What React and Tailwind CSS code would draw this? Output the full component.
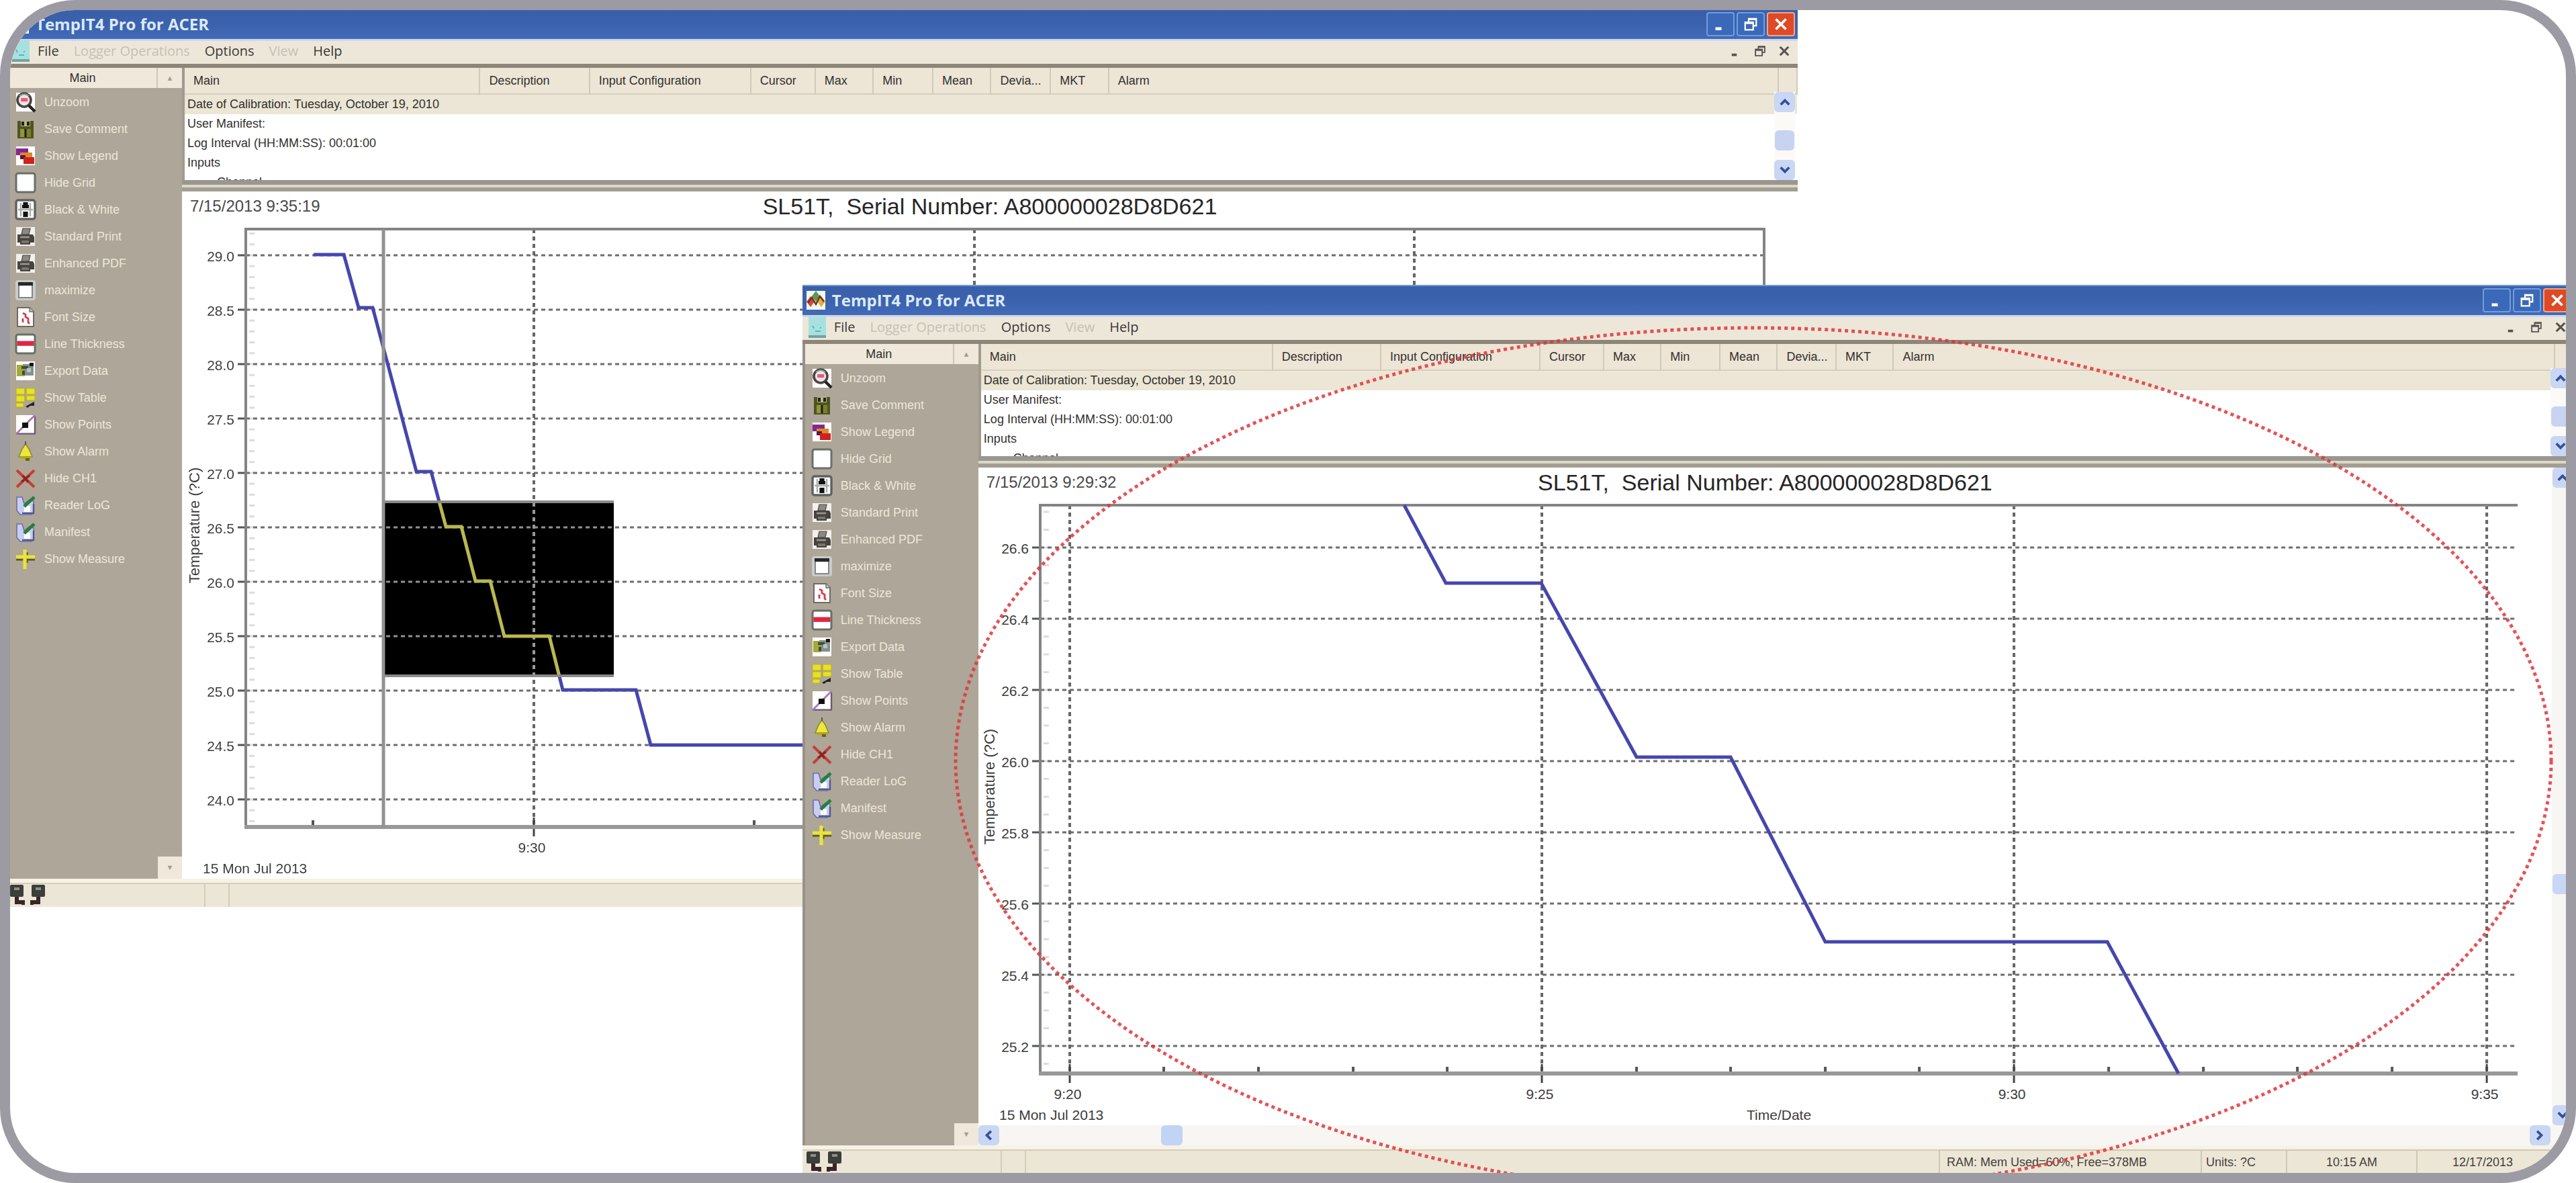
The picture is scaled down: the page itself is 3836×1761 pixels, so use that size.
import clsx from 'clsx';

const TOOLS = [
    ['Unzoom', 'zoom'],
    ['Save Comment', 'comment'],
    ['Show Legend', 'legend'],
    ['Hide Grid', 'grid'],
    ['Black & White', 'mono'],
    ['Standard Print', 'print'],
    ['Enhanced PDF', 'print'],
    ['maximize', 'maximize'],
    ['Font Size', 'font'],
    ['Line Thickness', 'thickness'],
    ['Export Data', 'export'],
    ['Show Table', 'table'],
    ['Show Points', 'points'],
    ['Show Alarm', 'alarm'],
    ['Hide CH1', 'hide'],
    ['Reader LoG', 'reader'],
    ['Manifest', 'reader'],
    ['Show Measure', 'measure'],
];

const COLUMNS = [
    ['Main', 'w-[18.3%]'],
    ['Description', 'w-[6.8%]'],
    ['Input Configuration', 'w-[10%]'],
    ['Cursor', 'w-[4%]'],
    ['Max', 'w-[3.6%]'],
    ['Min', 'w-[3.7%]'],
    ['Mean', 'w-[3.6%]'],
    ['Devia...', 'w-[3.7%]'],
    ['MKT', 'w-[3.6%]'],
    ['Alarm', ''],
    ['', 'w-[28px]'],
];

const MENU = [
    ['File', true],
    ['Logger Operations', false],
    ['Options', true],
    ['View', false],
    ['Help', true],
];

// Full session, 9:27 onwards
const overview = {
    width: 2406,
    height: 971,
    plot: { left: 95, top: 4, right: 2356, bottom: 894 },
    closed: true,
    yLabels: ['29.0', '28.5', '28.0', '27.5', '27.0', '26.5', '26.0', '25.5', '25.0', '24.5', '24.0'],
    yStart: 43,
    yStep: 81,
    yMinor: 5,
    xLabels: [[524, '9:30'], [1180, '9:35'], [1835, '9:40']],
    xMinor: [195, 852, 1508, 2163],
    line: '196,42 241,42 263,121 284,121 349,365 371,365 393,447 416,447 437,528 459,528 480,610 547,610 567,690 676,690 698,772 1300,772',
    axisTitle: [18, 445],
    selection: { x: 302, y: 410, width: 341, height: 261 },
};

// Zoomed in on the selected part
const detail = {
    width: 2343,
    height: 927,
    plot: { left: 92, top: 4, right: 2292, bottom: 850 },
    closed: false,
    yLabels: ['26.6', '26.4', '26.2', '26.0', '25.8', '25.6', '25.4', '25.2'],
    yStart: 67,
    yStep: 106,
    yMinor: 4,
    xLabels: [[136, '9:20'], [839, '9:25'], [1542, '9:30'], [2246, '9:35']],
    xMinor: [276, 417, 558, 698, 980, 1120, 1261, 1401, 1683, 1824, 1964, 2105],
    line: '634,4 696,120 838,120 980,379 1120,379 1261,654 1681,654 1787,850',
    axisTitle: [16, 423],
    xTitle: 'Time/Date',
};

const Icon = ({ name }) => (
    <svg viewBox="0 0 16 16" className="h-8 w-8 shrink-0" aria-hidden="true">
        {name === 'zoom' && (
            <>
                <rect x="1" y="1" width="14" height="14" fill="#fff" />
                <circle cx="7" cy="6.5" r="5" fill="#f5e3e3" stroke="#4a4444" strokeWidth="1.8" />
                <path d="M3.6 3.6A4.6 4.6 0 0 1 10.4 3.6" fill="none" stroke="#7da893" strokeWidth="1" />
                <rect x="4.6" y="5" width="5" height="2.6" fill="#e0607c" />
                <path d="M10.5 10.5L15 15" stroke="#222" strokeWidth="2.2" />
            </>
        )}
        {name === 'comment' && (
            <>
                <rect x="2" y="2" width="12" height="13" fill="#4f5420" />
                <rect x="4.5" y="2" width="7" height="4" fill="#b5b78c" />
                <rect x="5" y="2.5" width="2" height="3" fill="#22240f" />
                <rect x="9" y="2.5" width="2" height="3" fill="#22240f" />
                <rect x="4" y="8" width="3" height="6" fill="#92953a" />
                <rect x="9" y="8" width="3" height="6" fill="#7b7e2a" />
                <path d="M8 8v6" stroke="#1d1f0c" />
            </>
        )}
        {name === 'legend' && (
            <>
                <rect x="1" y="1" width="14" height="14" fill="#fff" />
                <rect x="1" y="2.5" width="9" height="5" fill="#86278e" />
                <rect x="4" y="5.5" width="9" height="5" fill="#d98a2c" />
                <path d="M4 7.5h4v3H4z" fill="#5a1a30" />
                <rect x="6.5" y="9" width="8" height="5" fill="#d0211f" />
            </>
        )}
        {name === 'grid' && <rect x="1" y="1" width="14" height="14" rx="1.5" fill="#fff" stroke="#67706a" strokeWidth="1.5" />}
        {name === 'mono' && (
            <>
                <rect x="1" y="1" width="14" height="14" rx="1.5" fill="#fff" stroke="#5f625f" strokeWidth="1.7" />
                <path d="M4.5 3v10M11.5 3v10M2.5 8h11" stroke="#a9adab" strokeWidth="1.2" />
                <rect x="6.2" y="2.5" width="3.6" height="2" fill="#111" />
                <rect x="5.5" y="4.5" width="5" height="2.5" fill="#111" />
                <rect x="6.2" y="9.5" width="3.6" height="4" fill="#111" />
            </>
        )}
        {name === 'print' && (
            <>
                <rect x="1" y="1" width="14" height="14" fill="#f3f0ea" />
                <path d="M6 2h5.5l-1 4.5H5z" fill="#8c8882" stroke="#4c4946" strokeWidth=".6" />
                <path d="M2 6.5h11.5l1 2v4h-3v1.5H4v-1.5H2z" fill="#45423f" />
                <path d="M4 8.5h7" stroke="#98948d" strokeWidth="1.4" />
                <rect x="5" y="11" width="5.5" height="2" fill="#77756c" />
            </>
        )}
        {name === 'maximize' && (
            <>
                <rect x=".5" y=".5" width="15" height="15" rx="2" fill="#c9cccb" />
                <rect x="3" y="3" width="10" height="10.5" fill="#fff" stroke="#83888a" />
                <rect x="2.5" y="2" width="11" height="2.6" fill="#26282b" />
            </>
        )}
        {name === 'font' && (
            <>
                <path d="M2 1h9l3 3v11H2z" fill="#fff" stroke="#6f6a63" />
                <path d="M11 1v3h3" fill="#c9c4ba" stroke="#6f6a63" strokeWidth=".7" />
                <path d="M6 5l2 1v2l2 1v3l1 1M6 9v3" fill="none" stroke="#d2404e" strokeWidth="1.4" />
            </>
        )}
        {name === 'thickness' && (
            <>
                <rect x="1" y="1" width="14" height="14" rx="1.5" fill="#fff" stroke="#657069" strokeWidth="1.5" />
                <rect x="1.7" y="5.8" width="12.6" height="3.6" fill="#dd2744" />
            </>
        )}
        {name === 'export' && (
            <>
                <rect x="1" y="1" width="14" height="14" fill="#fff" />
                <rect x="1.5" y="3.5" width="6" height="8.5" fill="#a5aa35" />
                <rect x="6" y="3" width="8" height="8.5" fill="#85908a" />
                <path d="M5 4.5h5v2H5zM5.5 8h2v3h-2z" fill="#434f2e" />
                <rect x="11" y="2" width="3" height="2.5" fill="#141414" />
                <rect x="9" y="6" width="3" height="3" fill="#bac3c0" />
            </>
        )}
        {name === 'table' && (
            <>
                <path d="M1 1h6.5v4.5H1zM8.5 1H15v4.5H8.500zM1 6.500h6.500V11H1zM8.500 6.500H15V10H8.500zM1 12h5.500v3H1z" fill="#e8e126" stroke="#b5b02a" strokeWidth=".5" />
                <path d="M8 1v10" stroke="#b9a069" strokeWidth="1.4" />
                <path d="M8 14.5l6.5-3.5v3h-3l-2 1.5z" fill="#222" />
            </>
        )}
        {name === 'points' && (
            <>
                <rect x="1" y="1" width="13.5" height="14" fill="#fff" />
                <path d="M1 14.8h14V2" fill="none" stroke="#6a5a72" strokeWidth="1.2" />
                <path d="M1 15L15 1" stroke="#a57ab8" strokeWidth="1.4" />
                <rect x="5.5" y="6.5" width="4.5" height="4" fill="#111" />
            </>
        )}
        {name === 'alarm' && (
            <>
                <path d="M8 2.500l2.500 3.500 2.500 6H3l2.500-6z" fill="#ece73a" stroke="#8d8a3a" strokeWidth=".8" />
                <path d="M4 12h8v1.500H4z" fill="#b3a620" />
                <rect x="8" y="13" width="3" height="2" fill="#6b6415" />
                <path d="M8 .5v2.500" stroke="#555" />
            </>
        )}
        {name === 'hide' && (
            <>
                <path d="M1.5 2L14.5 14.5M14.5 2L1.5 14.5" stroke="#c43e3a" strokeWidth="2" />
                <path d="M5 10.5L11 6M6 6l4 5" stroke="#8e2220" strokeWidth="1.6" />
            </>
        )}
        {name === 'reader' && (
            <>
                <path d="M1.5 2h4L7 7l4-3 3 1v8.5L12 15H4l-2.5-3z" fill="#c9cdf0" stroke="#6b6fa8" strokeWidth=".8" />
                <rect x="7" y="8.5" width="4.5" height="4.5" fill="#fff" />
                <path d="M7 9l7.5-7" stroke="#23803a" strokeWidth="2.4" />
                <path d="M5.5 14h8.5V7" fill="none" stroke="#50588f" strokeWidth="1.2" />
            </>
        )}
        {name === 'measure' && (
            <>
                <path d="M1 8.5h14M9 3v8" stroke="#5c5a24" strokeWidth="1.5" />
                <path d="M1 6.5h14M7.5 1v14.5" stroke="#e9e43a" strokeWidth="2.6" />
            </>
        )}
    </svg>
);

const ControlGlyph = ({ kind }) => (
    <svg viewBox="0 0 16 16" className="h-full w-full" fill="none" stroke="currentColor" aria-hidden="true">
        {kind === 'minimize' && <path d="M3 12.5h6" strokeWidth="3" />}
        {kind === 'restore' && (
            <path d="M6 5.5V2.5h7.5v7H10.5M2.5 6h8v7.5h-8zM2.5 7h8M6 3.2h7.5" strokeWidth="1.5" />
        )}
        {kind === 'close' && <path d="M3 3l10 10M13 3L3 13" strokeWidth="2.5" />}
    </svg>
);

const WINDOW_CONTROLS = ['minimize', 'restore', 'close'];

const TitleBar = () => (
    <div className="flex h-[45px] items-center border-t-2 border-[#6f9ad8] bg-linear-to-b from-[#3a5fa9] via-[#3b62ad] to-[#416bb8] pr-1 pb-0.5 pl-1">
        <svg viewBox="0 0 16 16" className="h-8 w-8" aria-hidden="true">
            <rect x="1" y="1" width="14" height="14" fill="#f4f6ef" />
            <path d="M8 1l3 4-3 4-3-4z" fill="#5b9a4c" />
            <path d="M4 5l3 4-3 4-3-4z" fill="#c8503a" />
            <path d="M12 5l3 4-3 4-3-4z" fill="#d9b63a" />
            <path d="M2 10l3-4 3 5 3-6 3 4" fill="none" stroke="#7a2a26" strokeWidth="1.2" />
        </svg>
        <h1 className="ml-2 font-['Open_Sans',sans-serif] text-2xl font-bold text-[#dbe9fb]">TempIT4 Pro for ACER</h1>
        <div className="ml-auto flex gap-[3px]">
            {WINDOW_CONTROLS.map((kind) => (
                <button
                    key={kind}
                    aria-label={kind}
                    className={clsx(
                        'h-9 w-[42px] rounded border-2 p-1 text-white',
                        kind === 'close' ? 'border-[#f0a58c] bg-[#dd4a25]' : 'border-[#6d9ee0] bg-[#3c68b8]'
                    )}
                >
                    <ControlGlyph kind={kind} />
                </button>
            ))}
        </div>
    </div>
);

const MenuBar = () => (
    <div className="flex h-[37px] items-center border-t-[3px] border-[#cfd6ec] bg-[#ede7da] pr-2 pb-1 pl-[9px]">
        <svg viewBox="0 0 13 16" className="h-8 w-[26px]" aria-hidden="true">
            <rect width="13" height="16" fill="#a8e0e0" />
            <rect y="14" width="13" height="2" fill="#6fa5a3" />
            <path d="M3 7l1 2M5 11h4M9 8v1" stroke="#55b5c4" />
        </svg>
        <nav className="ml-3 flex gap-[22px] font-['Open_Sans',sans-serif] text-xl">
            {MENU.map(([label, enabled]) => (
                <button key={label} disabled={!enabled} className={enabled ? 'text-[#3a3833]' : 'text-[#c6c0b3]'}>
                    {label}
                </button>
            ))}
        </nav>
        <div className="ml-auto flex gap-3 text-[#57544d]">
            {WINDOW_CONTROLS.map((kind) => (
                <button key={kind} aria-label={`${kind} document`} className="h-5 w-6">
                    <ControlGlyph kind={kind} />
                </button>
            ))}
        </div>
    </div>
);

const Sidebar = () => (
    <aside className="flex w-[262px] shrink-0 flex-col border-l-4 border-[#96928a] bg-[#aea698] text-lg">
        <div className="flex h-[30px] bg-[#efe8db] leading-[30px] text-[#33312d]">
            <button className="grow border-r-2 border-[#cfc6b6]">Main</button>
            <button aria-label="Scroll tools up" className="w-9 text-[11px] text-[#a39b8d]">▲</button>
        </div>
        <ul className="mt-px">
            {TOOLS.map(([label, icon]) => (
                <li key={label}>
                    <button className="flex h-10 w-full items-center gap-3 pl-[9px] text-[#ece6d9]">
                        <Icon name={icon} />
                        {label}
                    </button>
                </li>
            ))}
        </ul>
        <button aria-label="Scroll tools down" className="mt-auto ml-auto h-[33px] w-9 bg-[#efe8db] text-[11px] text-[#a39b8d]">▼</button>
    </aside>
);

const ScrollButton = ({ direction }) => (
    <button aria-label={`Scroll ${direction}`} className="flex h-[30px] w-[31px] shrink-0 items-center justify-center rounded-md bg-[#c9d7f5] text-[#34509c]">
        <svg viewBox="0 0 16 16" className="h-5 w-5" fill="none" stroke="currentColor" strokeWidth="3" aria-hidden="true">
            {direction === 'up' && <path d="M3 11l5-5 5 5" />}
            {direction === 'down' && <path d="M3 5l5 5 5-5" />}
            {direction === 'left' && <path d="M11 3L6 8l5 5" />}
            {direction === 'right' && <path d="M5 3l5 5-5 5" />}
        </svg>
    </button>
);

const LogList = () => (
    <div className="relative h-[167px] overflow-hidden bg-white text-lg text-[#33312d]">
        <table className="w-full table-fixed border-collapse text-left">
            <thead>
                <tr className="h-[39px] border-b-2 border-[#d8cfbd] bg-[#ede5d6]">
                    {COLUMNS.map(([label, width], i) => (
                        <th key={i} className={clsx('border-r-2 border-[#d2c9b8] pl-[13px] font-normal whitespace-nowrap', width)}>
                            {label}
                        </th>
                    ))}
                </tr>
            </thead>
            <tbody className="leading-[29px]">
                <tr className="bg-[#ebe6d5]">
                    <td colSpan={11} className="pl-1">Date of Calibration: Tuesday, October 19, 2010</td>
                </tr>
                <tr><td colSpan={11} className="pl-1">User Manifest:</td></tr>
                <tr><td colSpan={11} className="pl-1">Log Interval (HH:MM:SS): 00:01:00</td></tr>
                <tr><td colSpan={11} className="pl-1">Inputs</td></tr>
                <tr><td colSpan={11} className="pl-12">Channel</td></tr>
            </tbody>
        </table>
        <div className="absolute top-9 right-1 bottom-0 flex flex-col items-center justify-between bg-[#fbfaf7]">
            <ScrollButton direction="up" />
            <div className="mt-3 h-[30px] w-[29px] rounded-md bg-[#c8d3f2]" />
            <ScrollButton direction="down" />
        </div>
    </div>
);

const Chart = ({ chart }) => {
    const { width, height, plot, yLabels, yStart, yStep, yMinor, xLabels, xMinor, selection } = chart;
    const middle = (plot.left + plot.right) / 2;
    const minorStep = yStep / yMinor;
    const minorTicks = [];
    for (let y = yStart - minorStep * 3; y < plot.bottom; y += minorStep) {
        if (y > plot.top + 4) minorTicks.push(y);
    }

    return (
        <svg viewBox={`0 0 ${width} ${height}`} className="isolate block h-auto w-full font-['Liberation_Sans',Arial,sans-serif] text-[21px]" role="img" aria-label="Temperature over time">
            <rect width={width} height={height} fill="#fff" />

            {minorTicks.map((y) => (
                <path key={y} d={`M${plot.left + 5} ${y}h8`} stroke="#dcdcdc" strokeWidth="3" />
            ))}

            {/* Grid and axis labels */}
            {yLabels.map((label, i) => {
                const y = yStart + yStep * i;
                return (
                    <g key={label}>
                        <path d={`M${plot.left - 12} ${y}h12`} stroke="#555" strokeWidth="3" />
                        <path d={`M${plot.left} ${y}H${plot.right}`} stroke="#6e6e6e" strokeWidth="3" strokeDasharray="6 5" />
                        <text x={plot.left - 17} y={y + 9} textAnchor="end" fill="#3c3c3c">{label}</text>
                    </g>
                );
            })}
            {xLabels.map(([x, label]) => (
                <g key={label}>
                    <path d={`M${x} ${plot.top}V${plot.bottom}`} stroke="#666" strokeWidth="4" strokeDasharray="6 5" />
                    <path d={`M${x} ${plot.bottom - 14}v28`} stroke="#444" strokeWidth="3" />
                    <text x={x - 3} y={plot.bottom + 38} textAnchor="middle" fill="#3c3c3c">{label}</text>
                </g>
            ))}
            {xMinor.map((x) => (
                <path key={x} d={`M${x} ${plot.bottom - 10}v12`} stroke="#555" strokeWidth="4" />
            ))}

            {/* Plot frame */}
            <path d={`M${plot.left} ${plot.top}H${plot.right}`} stroke="#848484" strokeWidth="4" />
            <path d={`M${plot.left} ${plot.top - 2}V${plot.bottom}`} stroke="#848484" strokeWidth="4" />
            <path d={`M${plot.left - 2} ${plot.bottom}H${plot.right}`} stroke="#989898" strokeWidth="6" />
            {chart.closed && <path d={`M${plot.right} ${plot.top - 2}V${plot.bottom}`} stroke="#848484" strokeWidth="4" />}

            <polyline points={chart.line} fill="none" stroke="#4646ae" strokeWidth="5" />

            {/* The selected area is shown inverted, like a text selection */}
            {selection && (
                <>
                    <path d={`M${selection.x - 2} ${plot.top}V${plot.bottom}`} stroke="#929292" strokeWidth="5" />
                    <rect {...selection} fill="#fff" className="mix-blend-difference" />
                    <path d={`M${selection.x} ${selection.y}h${selection.width}M${selection.x} ${selection.y + selection.height - 2}h${selection.width}`} stroke="#8a8a8a" strokeWidth="4" />
                </>
            )}

            <text
                x="0"
                y="8"
                textAnchor="middle"
                fill="#3c3c3c"
                className="text-[22px]"
                transform={`translate(${chart.axisTitle.join(' ')}) rotate(-90)`}
            >
                Temperature (?C)
            </text>
            <text x="31" y={plot.bottom + 69} fill="#3c3c3c">15 Mon Jul 2013</text>
            {chart.xTitle && <text x={middle} y={plot.bottom + 69} textAnchor="middle" fill="#3c3c3c">{chart.xTitle}</text>}
        </svg>
    );
};

const ChartPane = ({ chart, time }) => (
    <div className="min-w-0 grow bg-white">
        <div className="relative flex h-[52px] items-center px-3 pb-2 text-2xl text-[#4a4a4a]">
            <span>{time}</span>
            <h2 className="absolute inset-x-0 text-center text-[34px] leading-[44px] whitespace-pre text-[#262626]">
                {'SL51T,  Serial Number: A800000028D8D621'}
            </h2>
        </div>
        <Chart chart={chart} />
    </div>
);

const PlugIcon = ({ flipped }) => (
    <svg viewBox="0 0 12 16" className={clsx('h-8 w-6', flipped && '-scale-x-100')} aria-hidden="true">
        <rect x="1" y="0" width="10" height="9" rx="1" fill="#3b3e39" />
        <path d="M4 2h4v2H4z" fill="#8b8f86" />
        <path d="M6 9v4h5v2" fill="none" stroke="#3a2529" strokeWidth="3" />
    </svg>
);

const StatusBar = ({ children }) => (
    <footer className="flex h-[42px] border-t-[6px] border-[#f6f2e6] bg-[#ece6d6] text-lg text-[#44413a]">
        <div className="flex w-[297px] items-center gap-2 border-t-2 border-r-2 border-[#d6cdb9] pl-1">
            <PlugIcon />
            <PlugIcon flipped />
        </div>
        <div className="w-9 border-t-2 border-r-2 border-[#d6cdb9]" />
        <div className="grow border-t-2 border-[#d6cdb9]" />
        {children}
    </footer>
);

const StatusCell = ({ className, children }) => (
    <div className={clsx('flex items-center border-t-2 border-l-2 border-[#d0c7b4]', className)}>{children}</div>
);

const LoggerWindow = ({ className, chart, time, scrollable, status }) => (
    <section className={clsx('absolute flex flex-col', className)}>
        <TitleBar />
        <MenuBar />
        <div className="flex border-t-[6px] border-[#8d8678]">
            <Sidebar />
            <div className="flex min-w-0 grow flex-col">
                <div className="border-l-4 border-[#a09b90]">
                    <LogList />
                </div>
                <div className="h-[17px] border-t-[7px] border-b-[6px] border-t-[#99978f] border-b-[#a29f92] bg-[#dbd8c9]" />
                <div className="flex grow">
                    <ChartPane chart={chart} time={time} />
                    {scrollable && (
                        <div className="flex w-[33px] shrink-0 flex-col items-center justify-between bg-[#f8f6f2]">
                            <ScrollButton direction="up" />
                            <div className="mt-[260px] h-[30px] w-[31px] rounded-md bg-[#c9d7f5]" />
                            <ScrollButton direction="down" />
                        </div>
                    )}
                </div>
                {scrollable && (
                    <div className="flex h-[30px] bg-[#f8f6f2] pr-[35px]">
                        <ScrollButton direction="left" />
                        <div className="ml-[10.3%] h-[30px] w-8 rounded-md bg-[#c2d3f5]" />
                        <div className="grow" />
                        <ScrollButton direction="right" />
                    </div>
                )}
            </div>
        </div>
        <StatusBar>{status}</StatusBar>
    </section>
);

export default function App() {
    return (
        <main className="relative h-screen w-full overflow-hidden rounded-[112px] border-[15px] border-[#9c9ba4] bg-white font-['Liberation_Sans',Arial,sans-serif]">
            <LoggerWindow className="-top-0.5 -left-1.5 w-[70.1%]" chart={overview} time="7/15/2013 9:35:19" />
            <LoggerWindow
                className="top-[409px] -right-3 left-[31%]"
                chart={detail}
                time="7/15/2013 9:29:32"
                scrollable
                status={
                    <>
                        <StatusCell className="w-[390px] pl-2.5">RAM: Mem Used=60%, Free=378MB</StatusCell>
                        <StatusCell className="w-[127px] pl-1.5">Units: ?C</StatusCell>
                        <StatusCell className="w-[194px] justify-center">10:15 AM</StatusCell>
                        <StatusCell className="w-[235px] pl-[52px]">12/17/2013</StatusCell>
                    </>
                }
            />
            {/* Callout around the zoomed chart */}
            <svg viewBox="0 0 3806 1731" className="pointer-events-none absolute inset-x-0 top-0 w-full" aria-hidden="true">
                <ellipse cx="2596" cy="1118" rx="1188" ry="645" fill="none" stroke="#e0343a" strokeOpacity=".85" strokeWidth="5" strokeDasharray="5 5" />
            </svg>
        </main>
    );
}
